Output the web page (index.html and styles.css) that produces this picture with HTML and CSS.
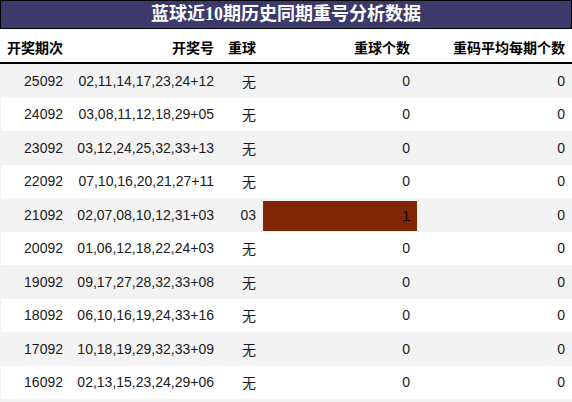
FILE: index.html
```html
<!DOCTYPE html>
<html lang="zh">
<head>
<meta charset="utf-8">
<link rel="stylesheet" href="styles.css">
</head>
<body>
<div class="page">
  <div class="title">蓝球近10期历史同期重号分析数据</div>
  <div class="grid head">
    <div class="c">开奖期次</div>
    <div class="c">开奖号</div>
    <div class="c">重球</div>
    <div class="c">重球个数</div>
    <div class="c">重码平均每期个数</div>
  </div>
  <div class="rows">
    <div class="grid row odd"><div class="c">25092</div><div class="c">02,11,14,17,23,24+12</div><div class="c">无</div><div class="c">0</div><div class="c">0</div></div>
    <div class="grid row"><div class="c">24092</div><div class="c">03,08,11,12,18,29+05</div><div class="c">无</div><div class="c">0</div><div class="c">0</div></div>
    <div class="grid row odd"><div class="c">23092</div><div class="c">03,12,24,25,32,33+13</div><div class="c">无</div><div class="c">0</div><div class="c">0</div></div>
    <div class="grid row"><div class="c">22092</div><div class="c">07,10,16,20,21,27+11</div><div class="c">无</div><div class="c">0</div><div class="c">0</div></div>
    <div class="grid row odd"><div class="c">21092</div><div class="c">02,07,08,10,12,31+03</div><div class="c">03</div><div class="c hotcell"><span class="hot">1</span></div><div class="c">0</div></div>
    <div class="grid row"><div class="c">20092</div><div class="c">01,06,12,18,22,24+03</div><div class="c">无</div><div class="c">0</div><div class="c">0</div></div>
    <div class="grid row odd"><div class="c">19092</div><div class="c">09,17,27,28,32,33+08</div><div class="c">无</div><div class="c">0</div><div class="c">0</div></div>
    <div class="grid row"><div class="c">18092</div><div class="c">06,10,16,19,24,33+16</div><div class="c">无</div><div class="c">0</div><div class="c">0</div></div>
    <div class="grid row odd"><div class="c">17092</div><div class="c">10,18,19,29,32,33+09</div><div class="c">无</div><div class="c">0</div><div class="c">0</div></div>
    <div class="grid row"><div class="c">16092</div><div class="c">02,13,15,23,24,29+06</div><div class="c">无</div><div class="c">0</div><div class="c">0</div></div>
  </div>
</div>
</body>
</html>
```

FILE: styles.css
```css
html, body {
  margin: 0;
  padding: 0;
  background: #f3f3f3;
}
.page {
  width: 572px;
  font-family: "Liberation Sans", "Noto Sans CJK SC", sans-serif;
  font-size: 14px;
  color: #1a1a1a;
}
.title {
  height: 27px;
  border: 1px solid #000;
  background: #3c3a6b;
  color: #fff;
  font-family: "Liberation Serif", "Noto Sans CJK SC", serif;
  font-weight: bold;
  font-size: 18px;
  line-height: 27px;
  text-align: center;
}
.grid {
  display: grid;
  grid-template-columns: 70px 151px 42px 154px 155px;
  align-items: center;
}
.head {
  box-sizing: border-box;
  height: 35px;
  padding-top: 3px;
  background: #fff;
  border-bottom: 2px solid #000;
  font-weight: bold;
  color: #000;
}
.c {
  text-align: right;
  padding-right: 7px;
  white-space: nowrap;
}
.rows {
  background: #f3f3f3;
}
.row {
  grid-template-columns: 69px 151px 42px 154px 155px;
  height: 33.5px;
  background: #fff;
  border-left: 1px solid #f3f3f3;
}
.row.odd {
  background: #f3f3f3;
}
.hotcell {
  align-self: stretch;
  display: flex;
  align-items: flex-start;
  justify-content: flex-end;
  padding-right: 0;
}
.hot {
  display: flex;
  align-items: center;
  justify-content: flex-end;
  box-sizing: border-box;
  width: 154px;
  height: 30px;
  margin-top: 3px;
  padding-right: 7px;
  background: #7f2704;
  color: #000;
}
```
